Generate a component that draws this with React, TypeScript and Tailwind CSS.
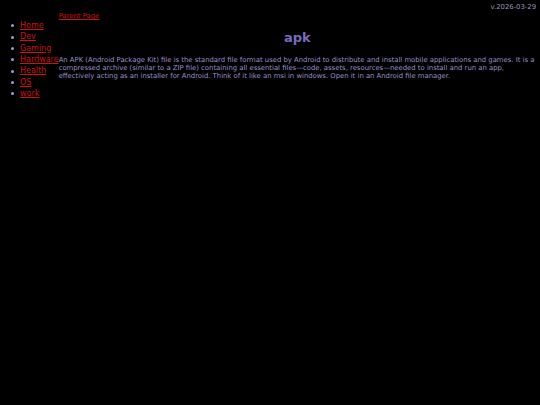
const navItems = ['Home', 'Dev', 'Gaming', 'Hardware', 'Health', 'OS', 'work']

export default function App() {
  return (
    <div
      className="min-h-screen bg-black text-[#9890c8]"
      style={{ fontFamily: '"DejaVu Sans", Verdana, sans-serif' }}
    >
      <div className="pr-[4px] pt-[3px] text-right text-[6.85px] leading-[9px] text-[#9a96b8]">
        v.2026-03-29
      </div>
      <div className="flex items-start">
        <ul className="mt-[8px] pl-[11px] text-[8px] leading-[11.35px]">
          {navItems.map((item) => (
            <li key={item} className="flex items-center">
              <span className="mr-[6px] h-[3px] w-[3px] shrink-0 rounded-full bg-[#a098d0]" />
              <a href="#" className="text-[#cc1111] underline">
                {item}
              </a>
            </li>
          ))}
        </ul>
        <main className="flex-1 pr-[4px]">
          <a href="#" className="block text-[6.85px] leading-[9px] text-[#cc1111] underline">
            Parent Page
          </a>
          <h1 className="mt-[9px] text-center text-[13px] font-bold leading-[16px] text-[#7a6abf]">
            apk
          </h1>
          <p className="mt-[9.5px] text-[6.85px] leading-[8px]">
            An APK (Android Package Kit) file is the standard file format used by Android to distribute and install
            mobile applications and games. It is a compressed archive (similar to a ZIP file) containing all essential
            files—code, assets, resources—needed to install and run an app, effectively acting as an installer for
            Android. Think of it like an msi in windows. Open it in an Android file manager.
          </p>
        </main>
      </div>
    </div>
  )
}
